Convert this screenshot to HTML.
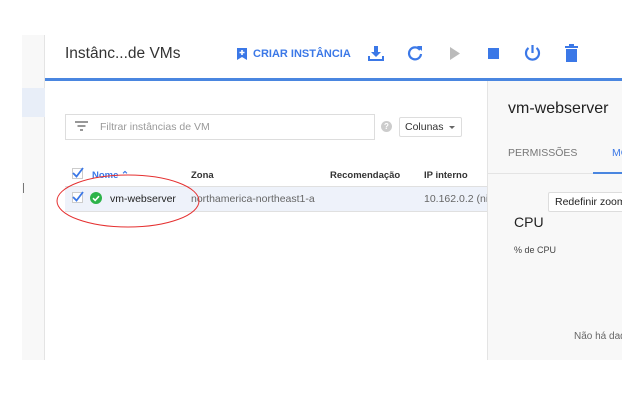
<!DOCTYPE html>
<html><head><meta charset="utf-8"><style>
*{margin:0;padding:0;box-sizing:border-box}
body{width:640px;height:400px;background:#fff;position:relative;overflow:hidden;font-family:"Liberation Sans",Arial,sans-serif;color:#222}
.a{position:absolute}
.t{white-space:nowrap}
</style></head><body>
<div class="a" style="left:22px;top:35px;width:23px;height:325px;background:#f8f8f8;border-right:1px solid #e4e4e4"></div>
<div class="a" style="left:22px;top:88px;width:23px;height:29px;background:#e8eef8"></div>
<div class="a" style="left:23px;top:183px;width:1px;height:10px;background:#777"></div>
<div class="a t" style="left:65px;top:45px;font-size:15.5px;color:#333">Instânc...de VMs</div>
<div class="a" style="left:45px;top:78px;width:577px;height:3px;background:#4a86e0"></div>
<svg class="a" style="left:236px;top:47px" width="12" height="14" viewBox="0 0 12 14"><path d="M1 1h10v12l-5-3-5 3z" fill="#3b78e7"/><path d="M6 3v5M3.5 5.5h5" stroke="#fff" stroke-width="1.6"/></svg>
<div class="a t" style="left:253px;top:48px;font-size:11px;font-weight:bold;color:#3b78e7">CRIAR INSTÂNCIA</div>
<svg class="a" style="left:368px;top:45px" width="16" height="17" viewBox="0 0 16 17"><path d="M6 1h4v6h3l-5 5-5-5h3z" fill="#3b78e7"/><path d="M1 11v4h14v-4" stroke="#3b78e7" stroke-width="2" fill="none"/></svg>
<svg class="a" style="left:407px;top:45px" width="16" height="16" viewBox="0 0 16 16"><path d="M13 5A6 6 0 1 0 14 9" stroke="#3b78e7" stroke-width="2.2" fill="none"/><path d="M10 1h5v5z" fill="#3b78e7"/></svg>
<svg class="a" style="left:450px;top:47px" width="10" height="13" viewBox="0 0 10 13"><path d="M0 0l10 6.5L0 13z" fill="#bbb"/></svg>
<div class="a" style="left:488px;top:48px;width:11px;height:11px;background:#3b78e7"></div>
<svg class="a" style="left:524px;top:44px" width="17" height="18" viewBox="0 0 17 18"><path d="M8.5 1v8" stroke="#3b78e7" stroke-width="2.2"/><path d="M4.5 4A6.5 6.5 0 1 0 12.5 4" stroke="#3b78e7" stroke-width="2.2" fill="none"/></svg>
<svg class="a" style="left:565px;top:44px" width="13" height="18" viewBox="0 0 13 18"><path d="M0 2h13v2H0zM4 0h5v2H4z" fill="#3b78e7"/><path d="M1 5h11v13H1z" fill="#3b78e7"/></svg>
<div class="a" style="left:65px;top:114px;width:310px;height:26px;border:1px solid #ddd;background:#fff"></div>
<svg class="a" style="left:75px;top:121px" width="13" height="10" viewBox="0 0 13 10"><path d="M0 1h13M2.5 5h8M5 9h3" stroke="#777" stroke-width="1.4"/></svg>
<div class="a t" style="left:100px;top:121px;font-size:10.5px;color:#999">Filtrar instâncias de VM</div>
<div class="a" style="left:381px;top:121px;width:11px;height:11px;border-radius:50%;background:#ccc;color:#fff;font-size:8px;text-align:center;line-height:11px;font-weight:bold">?</div>
<div class="a" style="left:399px;top:117px;width:63px;height:20px;border:1px solid #ddd;background:#fff;border-radius:2px"></div>
<div class="a t" style="left:405px;top:121px;font-size:10.5px;color:#333">Colunas</div>
<div class="a" style="left:449px;top:126px;border-left:3px solid transparent;border-right:3px solid transparent;border-top:3px solid #666"></div>
<div class="a" style="left:72px;top:168px;width:11px;height:11px;border:1px solid #ccc"></div>
<svg class="a" style="left:72px;top:167px" width="12" height="11" viewBox="0 0 12 11"><path d="M1 6l3.5 3.5L11 1" stroke="#3b78e7" stroke-width="1.8" fill="none"/></svg>
<div class="a t" style="left:92px;top:170px;font-size:9.5px;font-weight:bold;color:#3b78e7">Nome ⌃</div>
<div class="a t" style="left:191px;top:170px;font-size:9.5px;font-weight:bold;color:#333">Zona</div>
<div class="a t" style="left:330px;top:170px;font-size:9.5px;font-weight:bold;color:#333">Recomendação</div>
<div class="a t" style="left:424px;top:170px;font-size:9.5px;font-weight:bold;color:#333">IP interno</div>
<div class="a" style="left:65px;top:186px;width:422px;height:26px;background:#eef2fa;border-top:1px solid #e0e0e0;border-bottom:1px solid #e0e0e0"></div>
<div class="a" style="left:72px;top:192px;width:11px;height:11px;border:1px solid #ccc;background:#fff"></div>
<svg class="a" style="left:72px;top:191px" width="12" height="11" viewBox="0 0 12 11"><path d="M1 6l3.5 3.5L11 1" stroke="#3b78e7" stroke-width="1.8" fill="none"/></svg>
<svg class="a" style="left:90px;top:192px" width="12" height="12" viewBox="0 0 12 12"><circle cx="6" cy="6" r="6" fill="#2db34a"/><path d="M3 6.2l2.2 2.2L9 4.2" stroke="#fff" stroke-width="1.6" fill="none"/></svg>
<div class="a t" style="left:110px;top:193px;font-size:10.5px;color:#222">vm-webserver</div>
<div class="a t" style="left:191px;top:193px;font-size:10.5px;color:#666">northamerica-northeast1-a</div>
<div class="a t" style="left:424px;top:193px;font-size:10.5px;color:#666;width:63px;overflow:hidden">10.162.0.2 (nic0)</div>
<div class="a" style="left:487px;top:81px;width:135px;height:279px;background:#f8f8f8;border-left:1px solid #e4e4e4;overflow:hidden">
<div class="a t" style="left:20px;top:19px;font-size:16px;color:#222">vm-webserver</div>
<div class="a t" style="left:20px;top:66px;font-size:10.5px;color:#777">PERMISSÕES</div>
<div class="a t" style="left:124px;top:66px;font-size:10.5px;color:#3b78e7">MO</div>
<div class="a" style="left:0;top:92px;width:135px;height:1px;background:#e4e4e4"></div>
<div class="a" style="left:105px;top:91px;width:30px;height:2px;background:#4a86e0"></div>
<div class="a" style="left:60px;top:111px;width:80px;height:20px;border:1px solid #ddd;background:#fff;border-radius:2px"></div>
<div class="a t" style="left:67px;top:115px;font-size:10.5px;color:#222">Redefinir zoom</div>
<div class="a t" style="left:26px;top:133px;font-size:14px;color:#222">CPU</div>
<div class="a t" style="left:26px;top:164px;font-size:9px;color:#444">% de CPU</div>
<div class="a t" style="left:86px;top:250px;font-size:10px;color:#666">Não há dados</div>
</div>
<svg class="a" style="left:0;top:0" width="640" height="400"><ellipse cx="128" cy="201" rx="71" ry="26" stroke="#e53030" stroke-width="1" fill="none"/></svg>
</body></html>
